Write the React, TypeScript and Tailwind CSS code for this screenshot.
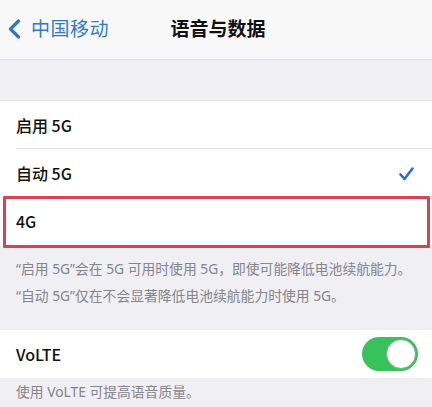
import React from "react";

const font = {
  fontFamily: '"Noto Sans CJK SC", "Noto Sans", "Liberation Sans", sans-serif',
};

// Latin glyphs (quotes, digits) come from Noto Sans so they stay narrow
const noteFont = {
  fontFamily: '"Noto Sans", "Noto Sans CJK SC", sans-serif',
};

function Row({ label, checked, last }: { label: string; checked?: boolean; last?: boolean }) {
  return (
    <div className="relative h-[48px] flex items-center pl-4 pr-[18px] bg-white">
      <span className="text-[16px] font-medium text-[#111]">{label}</span>
      <div className="flex-1" />
      {checked && (
        <svg width="15" height="14" viewBox="0 0 15 14" className="mt-[1px]">
          <polyline
            points="1.5,7.5 5.5,12 13.5,1.5"
            fill="none"
            stroke="#2a72c8"
            strokeWidth="2.6"
            strokeLinecap="round"
            strokeLinejoin="round"
          />
        </svg>
      )}
      {!last && <div className="absolute left-4 right-0 bottom-0 h-px bg-[#e3e3e7]" />}
    </div>
  );
}

export default function App() {
  return (
    <div className="w-[432px] h-[407px] bg-[#efeff4] overflow-hidden relative" style={font}>
      {/* navigation bar */}
      <div className="h-[60px] bg-[#f8f8f9] border-b border-[#dcdce0] flex items-center relative">
        <div className="flex items-center pl-[8px] pb-[2px]">
          <svg width="13" height="20" viewBox="0 0 13 20">
            <polyline
              points="10.5,2 2.5,10 10.5,18"
              fill="none"
              stroke="#2f77cc"
              strokeWidth="3.2"
              strokeLinecap="round"
              strokeLinejoin="round"
            />
          </svg>
          <span className="ml-[10px] text-[19px] text-[#3179cb] tracking-[0.5px]">中国移动</span>
        </div>
        <div className="absolute inset-0 flex items-center justify-center pb-[2px] pointer-events-none">
          <span className="text-[19px] font-bold text-[#111] ml-[4px]">语音与数据</span>
        </div>
      </div>

      <div className="h-[40px]" />

      {/* network mode options */}
      <div className="relative border-t border-[#e3e3e7]">
        <Row label="启用 5G" />
        <Row label="自动 5G" checked />
        <Row label="4G" last />
        <div className="absolute left-[3px] right-[2px] top-[95px] h-[52px] border-[3px] border-[#d8434f] rounded-[1px]" />
      </div>

      <div className="px-4 pt-[10px] text-[13.8px] text-[#85858a] leading-[27px] whitespace-nowrap" style={noteFont}>
        <p>“启用 5G”会在 5G 可用时使用 5G，即使可能降低电池续航能力。</p>
        <p>“自动 5G”仅在不会显著降低电池续航能力时使用 5G。</p>
      </div>

      {/* VoLTE switch */}
      <div className="mt-[21px] h-[48px] bg-white flex items-center pl-4 pr-[14px]">
        <span className="text-[16px] font-medium text-[#111]">VoLTE</span>
        <div className="flex-1" />
        <div className="w-[56px] h-[34px] rounded-full bg-[#38c25a] relative">
          <div className="absolute right-[2px] top-[2px] w-[30px] h-[30px] rounded-full bg-white border border-[#7aa88a]" />
        </div>
      </div>

      <div className="px-4 pt-[4px] text-[13.8px] text-[#85858a] leading-[20px] whitespace-nowrap" style={noteFont}>
        <p>使用 VoLTE 可提高语音质量。</p>
      </div>
    </div>
  );
}
